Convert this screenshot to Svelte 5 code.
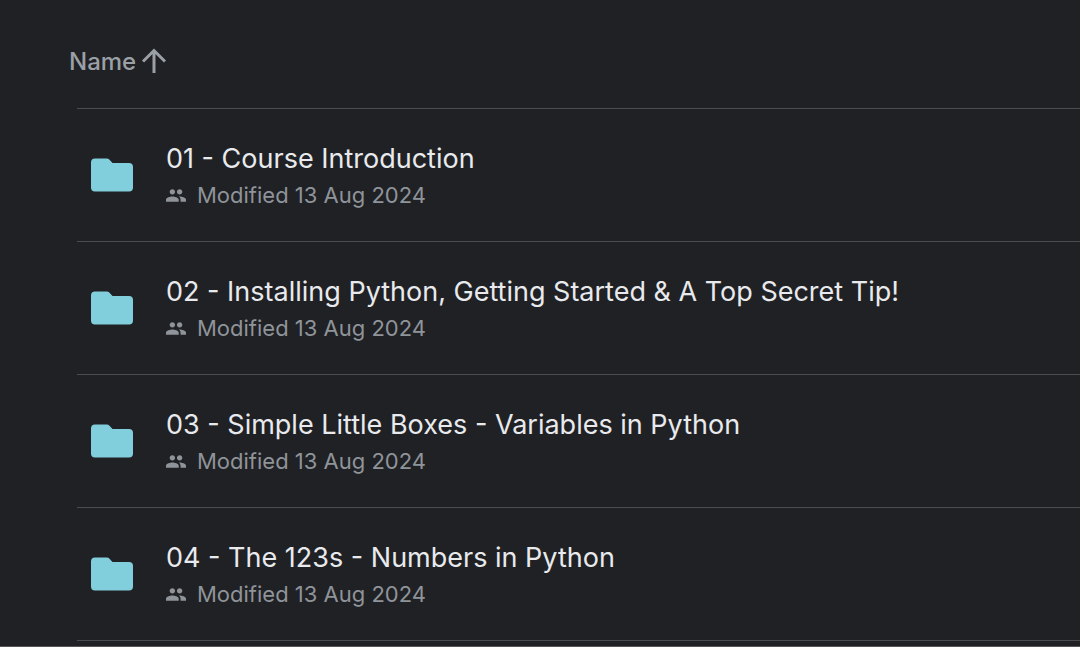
<script lang="ts">
  interface Folder {
    name: string
    modified: string
  }

  const folders: Folder[] = [
    { name: '01 - Course Introduction', modified: '13 Aug 2024' },
    { name: '02 - Installing Python, Getting Started & A Top Secret Tip!', modified: '13 Aug 2024' },
    { name: '03 - Simple Little Boxes - Variables in Python', modified: '13 Aug 2024' },
    { name: '04 - The 123s - Numbers in Python', modified: '13 Aug 2024' },
  ]

  let ascending = $state(true)
  let sorted = $derived(ascending ? folders : [...folders].reverse())
</script>

<main class="drive">
  <button class="sort" type="button" onclick={() => (ascending = !ascending)}>
    Name
    <svg class="sort-arrow" class:down={!ascending} viewBox="0 0 26 26" width="26" height="26" aria-hidden="true">
      <path d="M13 25V3M2 13.5L13 2.5l11 11" />
    </svg>
  </button>

  <ul class="list">
    {#each sorted as folder (folder.name)}
      <li class="row">
        <svg class="folder" viewBox="0 0 42 34" width="42" height="34" aria-hidden="true">
          <path d="M4 .5h11.500q2 0 3 1.200L21.500 5H38q4 0 4 4v20.500q0 4-4 4H4q-4 0-4-4V4.500q0-4 4-4z" />
        </svg>
        <div class="text">
          <span class="name">{folder.name}</span>
          <span class="meta">
            <svg class="shared" viewBox="1 5 22 14" width="20" height="13" aria-hidden="true">
              <path d="M16 11c1.66 0 2.99-1.34 2.99-3S17.66 5 16 5s-3 1.34-3 3 1.34 3 3 3zm-8 0c1.66 0 2.99-1.34 2.99-3S9.66 5 8 5 5 6.34 5 8s1.34 3 3 3zm0 2c-2.33 0-7 1.17-7 3.5V19h14v-2.5c0-2.33-4.67-3.5-7-3.5zm8 0c-.29 0-.62.02-.97.05 1.16.84 1.97 1.97 1.97 3.45V19h6v-2.5c0-2.33-4.67-3.5-7-3.5z" />
            </svg>
            Modified {folder.modified}
          </span>
        </div>
      </li>
    {/each}
  </ul>
</main>

<style>
  :global(body) {
    margin: 0;
    background: #202124;
  }

  .drive {
    padding: 44px 0 5px;
    border-bottom: 1px solid #57545a;
    font-family: Inter, 'Liberation Sans', sans-serif;
    color: #e8eaed;
  }

  .sort {
    display: flex;
    align-items: center;
    gap: 5px;
    height: 34px;
    margin-left: 69px;
    padding: 0;
    border: 0;
    background: none;
    color: #9aa0a6;
    font: inherit;
    font-size: 24px;
    font-weight: 500;
    cursor: pointer;
  }

  .sort-arrow {
    fill: none;
    stroke: currentColor;
    stroke-width: 3;
  }
  .sort-arrow.down { transform: rotate(180deg); }

  .list {
    margin: 30px 0 0 77px;
    padding: 0;
    list-style: none;
    border-top: 1px solid #4b4c4f;
  }

  .row {
    display: flex;
    align-items: center;
    gap: 33px;
    height: 132px;
    padding-left: 14px;
    border-bottom: 1px solid #4b4c4f;
  }

  .folder {
    flex: none;
    fill: #81cfdc;
  }

  .text {
    display: flex;
    flex-direction: column;
    gap: 2px;
    padding-top: 2px;
    white-space: nowrap;
  }

  .name {
    font-size: 27px;
    line-height: 36px;
  }

  .meta {
    display: flex;
    align-items: center;
    gap: 11px;
    color: #8f949a;
    font-size: 22px;
    line-height: 32px;
  }

  .shared { fill: currentColor; }
</style>
